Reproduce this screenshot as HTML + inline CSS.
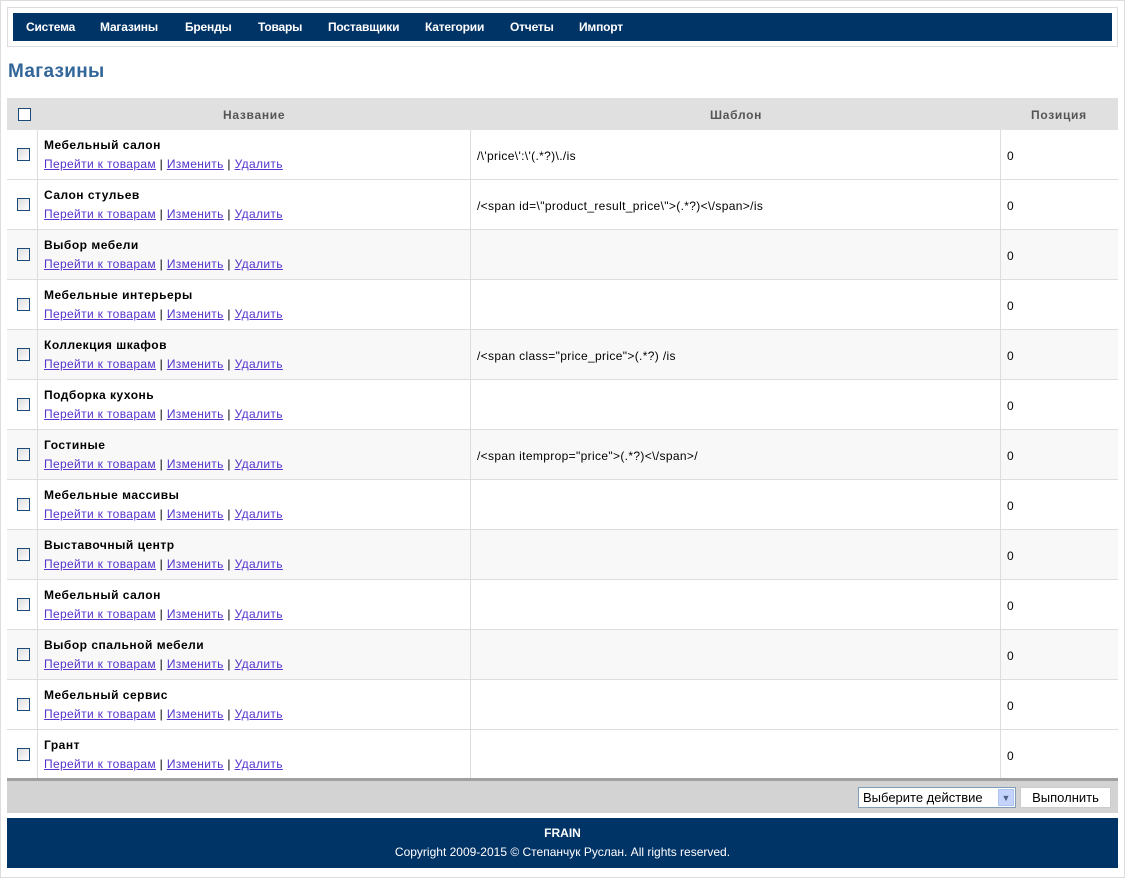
<!DOCTYPE html>
<html><head><meta charset="utf-8"><style>
*{margin:0;padding:0;box-sizing:border-box}
body{width:1125px;height:878px;background:#fff;font-family:"Liberation Sans",Arial,sans-serif;font-size:12px;position:relative;overflow:hidden}
.frame{position:absolute;left:0;top:0;width:1125px;height:878px;border:1px solid #ddd}
.navbox{position:absolute;left:7px;top:7px;width:1111px;height:40px;border:1px solid #ddd}
.nav{position:absolute;left:13px;top:13px;width:1099px;height:28px;background:#003366;color:#fff;font-weight:bold;font-size:12px;letter-spacing:-.2px}
.nav span{position:absolute;top:7px}
h1{position:absolute;left:8px;top:61px;font-size:19px;color:#336699;font-weight:bold;letter-spacing:.3px}
.tbl{position:absolute;left:7px;top:98px;width:1111px}
.hdr{height:32px;background:#e0e0e0;position:relative;color:#555;font-weight:bold;letter-spacing:.7px}
.hdr span{position:absolute;top:10px}
.row{height:50px;position:relative;border-bottom:1px solid #ddd}
.row:nth-child(odd){background:#f8f8f8}
.row .c1{position:absolute;left:0;top:0;width:31px;height:49px;border-right:1px solid #ddd}
.row .c2{position:absolute;left:31px;top:0;width:433px;height:49px;border-right:1px solid #ddd}
.row .c3{position:absolute;left:464px;top:0;width:530px;height:49px;border-right:1px solid #ddd}
.cb{position:absolute;width:13px;height:13px;border:1px solid #1c4a78;background:linear-gradient(135deg,#ddd,#fff)}
.nm{position:absolute;left:6px;top:8px;font-weight:bold;font-size:12px;color:#000;letter-spacing:.5px}
.ln{position:absolute;left:6px;top:27px;font-size:12px;color:#000;letter-spacing:.35px}
.ln a{color:#5533cc;text-decoration:underline}
.tp{position:absolute;left:6px;top:19px;font-size:12px;letter-spacing:.35px}
.ps{position:absolute;left:1000px;top:19px;font-size:12px}
.bar{position:absolute;left:7px;top:778px;width:1111px;height:35px;background:#d3d3d3;border-top:3px solid #a0a0a0}
.sel{position:absolute;left:851px;top:6px;width:158px;height:21px;border:1px solid #7f9db9;background:#fff;font-size:13px;padding:2px 0 0 4px}
.sel i{position:absolute;right:1px;top:1px;width:16px;height:17px;background:#c3d3fd;border:1px solid #b0c4f0;color:#4d6185;font-size:9px;text-align:center;line-height:16px;font-style:normal}
.btn{position:absolute;left:1013px;top:6px;width:91px;height:21px;background:#fff;border:1px solid #ccc;font-size:13px;text-align:center;padding-top:2px}
.foot{position:absolute;left:7px;top:818px;width:1111px;height:50px;background:#003366;color:#fff;text-align:center;font-size:12px}
</style></head><body>
<div class="frame"></div>
<div class="navbox"></div>
<div class="nav">
<span style="left:13px">Система</span><span style="left:87px">Магазины</span><span style="left:172px">Бренды</span><span style="left:245px">Товары</span><span style="left:315px">Поставщики</span><span style="left:412px">Категории</span><span style="left:497px">Отчеты</span><span style="left:566px">Импорт</span>
</div>
<h1>Магазины</h1>
<div class="tbl">
<div class="hdr"><div class="cb" style="left:11px;top:10px;background:#fff"></div><span style="left:216px">Название</span><span style="left:703px">Шаблон</span><span style="left:1024px">Позиция</span></div>
<div>
<div class="row" style="background:#fff"><div class="c1"><div class="cb" style="left:10px;top:18px"></div></div><div class="c2"><div class="nm">Мебельный салон</div><div class="ln"><a>Перейти к товарам</a> | <a>Изменить</a> | <a>Удалить</a></div></div><div class="c3"><div class="tp">/\'price\':\'(.*?)\./is</div></div><div class="ps">0</div></div>
<div class="row"><div class="c1"><div class="cb" style="left:10px;top:18px"></div></div><div class="c2"><div class="nm">Салон стульев</div><div class="ln"><a>Перейти к товарам</a> | <a>Изменить</a> | <a>Удалить</a></div></div><div class="c3"><div class="tp">/&lt;span id=\"product_result_price\"&gt;(.*?)&lt;\/span&gt;/is</div></div><div class="ps">0</div></div>
<div class="row"><div class="c1"><div class="cb" style="left:10px;top:18px"></div></div><div class="c2"><div class="nm">Выбор мебели</div><div class="ln"><a>Перейти к товарам</a> | <a>Изменить</a> | <a>Удалить</a></div></div><div class="c3"></div><div class="ps">0</div></div>
<div class="row"><div class="c1"><div class="cb" style="left:10px;top:18px"></div></div><div class="c2"><div class="nm">Мебельные интерьеры</div><div class="ln"><a>Перейти к товарам</a> | <a>Изменить</a> | <a>Удалить</a></div></div><div class="c3"></div><div class="ps">0</div></div>
<div class="row"><div class="c1"><div class="cb" style="left:10px;top:18px"></div></div><div class="c2"><div class="nm">Коллекция шкафов</div><div class="ln"><a>Перейти к товарам</a> | <a>Изменить</a> | <a>Удалить</a></div></div><div class="c3"><div class="tp">/&lt;span class="price_price"&gt;(.*?) /is</div></div><div class="ps">0</div></div>
<div class="row"><div class="c1"><div class="cb" style="left:10px;top:18px"></div></div><div class="c2"><div class="nm">Подборка кухонь</div><div class="ln"><a>Перейти к товарам</a> | <a>Изменить</a> | <a>Удалить</a></div></div><div class="c3"></div><div class="ps">0</div></div>
<div class="row"><div class="c1"><div class="cb" style="left:10px;top:18px"></div></div><div class="c2"><div class="nm">Гостиные</div><div class="ln"><a>Перейти к товарам</a> | <a>Изменить</a> | <a>Удалить</a></div></div><div class="c3"><div class="tp">/&lt;span itemprop="price"&gt;(.*?)&lt;\/span&gt;/</div></div><div class="ps">0</div></div>
<div class="row"><div class="c1"><div class="cb" style="left:10px;top:18px"></div></div><div class="c2"><div class="nm">Мебельные массивы</div><div class="ln"><a>Перейти к товарам</a> | <a>Изменить</a> | <a>Удалить</a></div></div><div class="c3"></div><div class="ps">0</div></div>
<div class="row"><div class="c1"><div class="cb" style="left:10px;top:18px"></div></div><div class="c2"><div class="nm">Выставочный центр</div><div class="ln"><a>Перейти к товарам</a> | <a>Изменить</a> | <a>Удалить</a></div></div><div class="c3"></div><div class="ps">0</div></div>
<div class="row"><div class="c1"><div class="cb" style="left:10px;top:18px"></div></div><div class="c2"><div class="nm">Мебельный салон</div><div class="ln"><a>Перейти к товарам</a> | <a>Изменить</a> | <a>Удалить</a></div></div><div class="c3"></div><div class="ps">0</div></div>
<div class="row"><div class="c1"><div class="cb" style="left:10px;top:18px"></div></div><div class="c2"><div class="nm">Выбор спальной мебели</div><div class="ln"><a>Перейти к товарам</a> | <a>Изменить</a> | <a>Удалить</a></div></div><div class="c3"></div><div class="ps">0</div></div>
<div class="row"><div class="c1"><div class="cb" style="left:10px;top:18px"></div></div><div class="c2"><div class="nm">Мебельный сервис</div><div class="ln"><a>Перейти к товарам</a> | <a>Изменить</a> | <a>Удалить</a></div></div><div class="c3"></div><div class="ps">0</div></div>
<div class="row" style="background:#fff;border-bottom:0"><div class="c1"><div class="cb" style="left:10px;top:18px"></div></div><div class="c2"><div class="nm">Грант</div><div class="ln"><a>Перейти к товарам</a> | <a>Изменить</a> | <a>Удалить</a></div></div><div class="c3"></div><div class="ps">0</div></div>
</div></div>
<div class="bar"><div class="sel">Выберите действие<i>&#9660;</i></div><div class="btn">Выполнить</div></div>
<div class="foot"><div style="font-weight:bold;padding-top:8px">FRAIN</div><div style="margin-top:5px">Copyright 2009-2015 © Степанчук Руслан. All rights reserved.</div></div>
</body></html>
